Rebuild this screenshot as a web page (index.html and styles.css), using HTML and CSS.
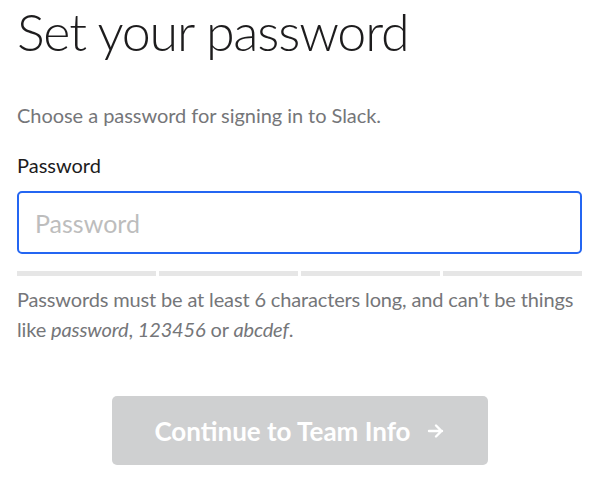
FILE: index.html
```html
<!DOCTYPE html>
<html lang="en">
<head>
<meta charset="utf-8">
<title>Set your password</title>
<link rel="stylesheet" href="styles.css">
</head>
<body>
<main class="page">
  <h1 class="title">Set your password</h1>
  <p class="lead">Choose a password for signing in to Slack.</p>
  <label class="label" for="pw">Password</label>
  <input class="input" id="pw" type="password" placeholder="Password">
  <div class="strength">
    <span class="seg"></span><span class="seg"></span><span class="seg"></span><span class="seg"></span>
  </div>
  <p class="hint">Passwords must be at least 6 characters long, and can’t be things like <em>password</em>, <em>123456</em> or <em>abcdef</em>.</p>
  <div class="actions">
    <button class="btn" type="button" disabled>Continue to Team Info
      <svg class="arrow" width="18" height="16" viewBox="0 0 18 16" aria-hidden="true"><path d="M2 8h13M9 2.5l5.5 5.5L9 13.5" fill="none" stroke="#fff" stroke-width="2.4" stroke-linecap="round" stroke-linejoin="round"/></svg>
    </button>
  </div>
</main>
</body>
</html>
```
FILE: styles.css
```css
html, body {
  margin: 0;
  padding: 0;
  background: #ffffff;
}
.page {
  font-family: Lato, "Liberation Sans", sans-serif;
  padding: 0 18px 0 17px;
  display: flex;
  flex-direction: column;
}
.title {
  margin: 0;
  font-weight: 300;
  font-size: 52px;
  line-height: 62px;
  color: #1d1c1d;
  letter-spacing: -1.2px;
}
.lead {
  margin: 41px 0 0;
  font-size: 20px;
  line-height: 24px;
  color: #757679;
  letter-spacing: -0.05px;
}
.label {
  margin-top: 26px;
  font-size: 20px;
  line-height: 24px;
  color: #1d1c1d;
}
.input {
  margin-top: 14px;
  height: 63px;
  box-sizing: border-box;
  border: 2px solid #2466f2;
  border-radius: 5px;
  padding: 0 16px;
  font-family: Lato, "Liberation Sans", sans-serif;
  font-size: 25px;
  outline: none;
}
.input::placeholder {
  color: #bdbdbd;
}
.strength {
  margin-top: 17px;
  display: grid;
  grid-template-columns: repeat(4, 1fr);
  gap: 3px;
}
.seg {
  height: 5px;
  background: #e6e6e6;
}
.hint {
  margin: 8px 0 0;
  font-size: 20px;
  line-height: 30px;
  color: #757679;
  letter-spacing: -0.15px;
}
.actions {
  margin-top: 52px;
  display: flex;
  justify-content: center;
}
.btn {
  width: 376px;
  height: 69px;
  border: none;
  border-radius: 5px;
  background: #cfd0d1;
  color: #ffffff;
  font-family: Lato, "Liberation Sans", sans-serif;
  font-weight: 700;
  font-size: 26px;
  display: flex;
  align-items: center;
  justify-content: center;
  gap: 16px;
  padding: 0;
}
.arrow {
  display: block;
}
```
